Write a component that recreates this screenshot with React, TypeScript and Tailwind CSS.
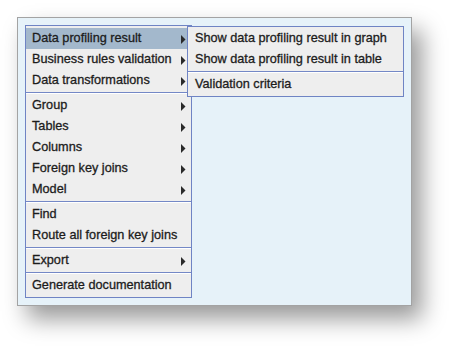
const mainItems: ({ label: string; sub?: boolean; active?: boolean } | "sep")[] = [
    { label: "Data profiling result", sub: true, active: true },
    { label: "Business rules validation", sub: true },
    { label: "Data transformations", sub: true },
    "sep",
    { label: "Group", sub: true },
    { label: "Tables", sub: true },
    { label: "Columns", sub: true },
    { label: "Foreign key joins", sub: true },
    { label: "Model", sub: true },
    "sep",
    { label: "Find" },
    { label: "Route all foreign key joins" },
    "sep",
    { label: "Export", sub: true },
    "sep",
    { label: "Generate documentation" },
]

const subItems: (string | "sep")[] = [
    "Show data profiling result in graph",
    "Show data profiling result in table",
    "sep",
    "Validation criteria",
]

const Separator = () => (
    <div className="h-[4px] flex flex-col pt-[1px]">
        <div className="h-px bg-[#7488c6]" />
        <div className="h-px bg-white" />
    </div>
)

const Arrow = () => (
    <svg width="5" height="9" viewBox="0 0 5 9" className="shrink-0">
        <path d="M0 0 L4.5 4.5 L0 9 Z" fill="#2a2a2a" />
    </svg>
)

const App = () => {
    return (
        <div
            className="w-[460px] h-[354px] bg-white pt-[17px] pl-[17px]"
            style={{ fontFamily: '"Liberation Sans", Arial, sans-serif' }}
        >
            <div className="relative w-[395px] h-[289px] bg-[#e6f2f9] border border-[#a3a3a3] p-[7px] shadow-[10px_13px_22px_rgba(0,0,0,0.4)]">
                <div className="w-[167px] bg-[#eeeeee] border border-[#6f84c4] pt-[2px] pb-[1px] text-[12.7px] text-[#1c1c1c] [-webkit-text-stroke:0.3px_#1c1c1c]">
                    {mainItems.map((item, i) =>
                        item === "sep" ? (
                            <Separator key={i} />
                        ) : (
                            <div
                                key={i}
                                className={`h-[21px] flex items-center justify-between pl-[6px] pr-[5px] pt-[1px] whitespace-nowrap ${item.active ? "bg-[#a3b8cc]" : ""}`}
                            >
                                <span>{item.label}</span>
                                {item.sub && <Arrow />}
                            </div>
                        )
                    )}
                </div>

                <div className="absolute left-[169px] top-[8px] w-[217px] bg-[#eeeeee] border border-[#6f84c4] pt-[1px] pb-[1px] text-[12.7px] text-[#1c1c1c] [-webkit-text-stroke:0.3px_#1c1c1c]">
                    {subItems.map((item, i) =>
                        item === "sep" ? (
                            <Separator key={i} />
                        ) : (
                            <div key={i} className="h-[21px] flex items-center pl-[7px] pt-[1px] whitespace-nowrap">
                                {item}
                            </div>
                        )
                    )}
                </div>
            </div>
        </div>
    )
}

export default App
